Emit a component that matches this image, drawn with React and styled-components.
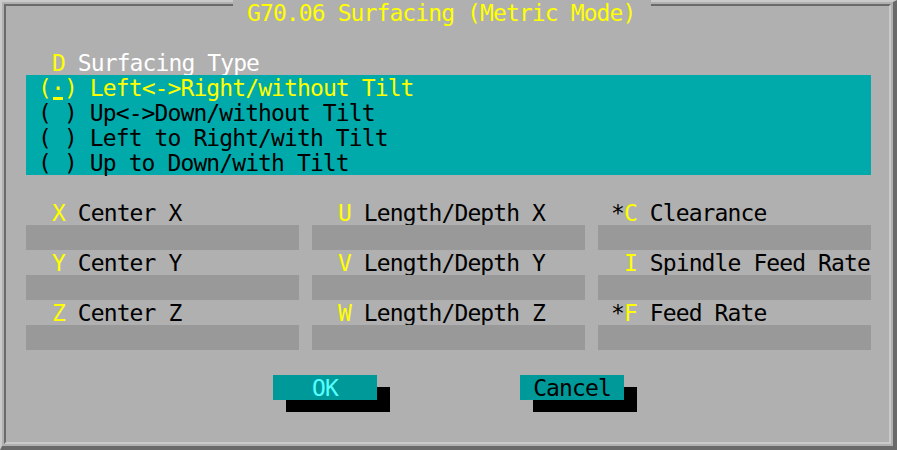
import React from "react";
import styled, { createGlobalStyle } from "styled-components";

const Global = createGlobalStyle`
  html, body { margin: 0; padding: 0; background: #b0b0b0; }
  * { box-sizing: border-box; }
`;

const FONT = `"DejaVu Sans Mono", "Liberation Mono", monospace`;

const Window = styled.div`
  position: relative;
  width: 897px;
  height: 450px;
  background: #b0b0b0;
  border-style: solid;
  border-width: 2px 4px 4px 2px;
  border-color: #cacaca #6a6a6a #6a6a6a #cacaca;
  padding: 2px;
  font-family: ${FONT};
  font-size: 23px;
  letter-spacing: -0.9px;
  line-height: 25px;
  white-space: pre;
`;

const Inner = styled.div`
  height: 100%;
  border: 2px solid;
  border-color: #6a6a6a #cacaca #cacaca #6a6a6a;
  padding: 44px 0 0 20px;
  display: flex;
  flex-direction: column;
`;

const Title = styled.div`
  position: absolute;
  top: -2px;
  left: 231px;
  width: 418px;
  height: 25px;
  padding: 1px 0 0 14px;
  background: #b0b0b0;
  color: #ffff00;
`;

const Row = styled.div`
  height: 25px;
  padding-top: 1px;
  color: ${(p) => p.$color || "#000"};
`;

const Hot = styled.span`
  color: #ffff00;
`;

const OptionList = styled.div`
  width: 845px;
  background: #00aaaa;
  padding-left: 12px;
  display: flex;
  flex-direction: column;
`;

const Cursor = styled.span`
  position: relative;
  display: inline-block;
  width: 13px;
  &::after {
    content: "";
    position: absolute;
    left: 2px;
    width: 10px;
    top: 21px;
    height: 3px;
    background: #ffff00;
  }
`;

const Fields = styled.div`
  margin-top: 25px;
  display: grid;
  grid-template-columns: repeat(3, 273px);
  column-gap: 13px;
`;

const Field = styled.div`
  display: flex;
  flex-direction: column;
`;

const Input = styled.div`
  height: 25px;
  background: #999999;
`;

const Buttons = styled.div`
  margin-top: 25px;
  display: flex;
  gap: 143px;
  padding-left: 247px;
`;

const Button = styled.div`
  width: 104px;
  height: 25px;
  padding-top: 1px;
  background: #009999;
  color: ${(p) => (p.$focused ? "#55ffff" : "#000")};
  text-align: center;
  box-shadow: 13px 12px 0 #000;
`;

const options = [
  "Left<->Right/without Tilt",
  "Up<->Down/without Tilt",
  "Left to Right/with Tilt",
  "Up to Down/with Tilt",
];

const fields = [
  { key: "X", text: "Center X" },
  { key: "U", text: "Length/Depth X" },
  { key: "C", text: "Clearance", req: true },
  { key: "Y", text: "Center Y" },
  { key: "V", text: "Length/Depth Y" },
  { key: "I", text: "Spindle Feed Rate" },
  { key: "Z", text: "Center Z" },
  { key: "W", text: "Length/Depth Z" },
  { key: "F", text: "Feed Rate", req: true },
];

export default function App() {
  return (
    <>
      <Global />
      <Window>
        <Title>G70.06 Surfacing (Metric Mode)</Title>
        <Inner>
          <Row $color="#ffffff">
            {"  "}
            <Hot>D</Hot>
            {" Surfacing Type"}
          </Row>
          <OptionList>
            {options.map((o, i) => (
              <Row key={o} $color={i === 0 ? "#ffff00" : "#000"}>
                {"("}
                {i === 0 ? <Cursor>·</Cursor> : " "}
                {") " + o}
              </Row>
            ))}
          </OptionList>
          <Fields>
            {fields.map((f) => (
              <Field key={f.key}>
                <Row>
                  {" " + (f.req ? "*" : " ")}
                  <Hot>{f.key}</Hot>
                  {" " + f.text}
                </Row>
                <Input />
              </Field>
            ))}
          </Fields>
          <Buttons>
            <Button $focused>OK</Button>
            <Button>Cancel</Button>
          </Buttons>
        </Inner>
      </Window>
    </>
  );
}
